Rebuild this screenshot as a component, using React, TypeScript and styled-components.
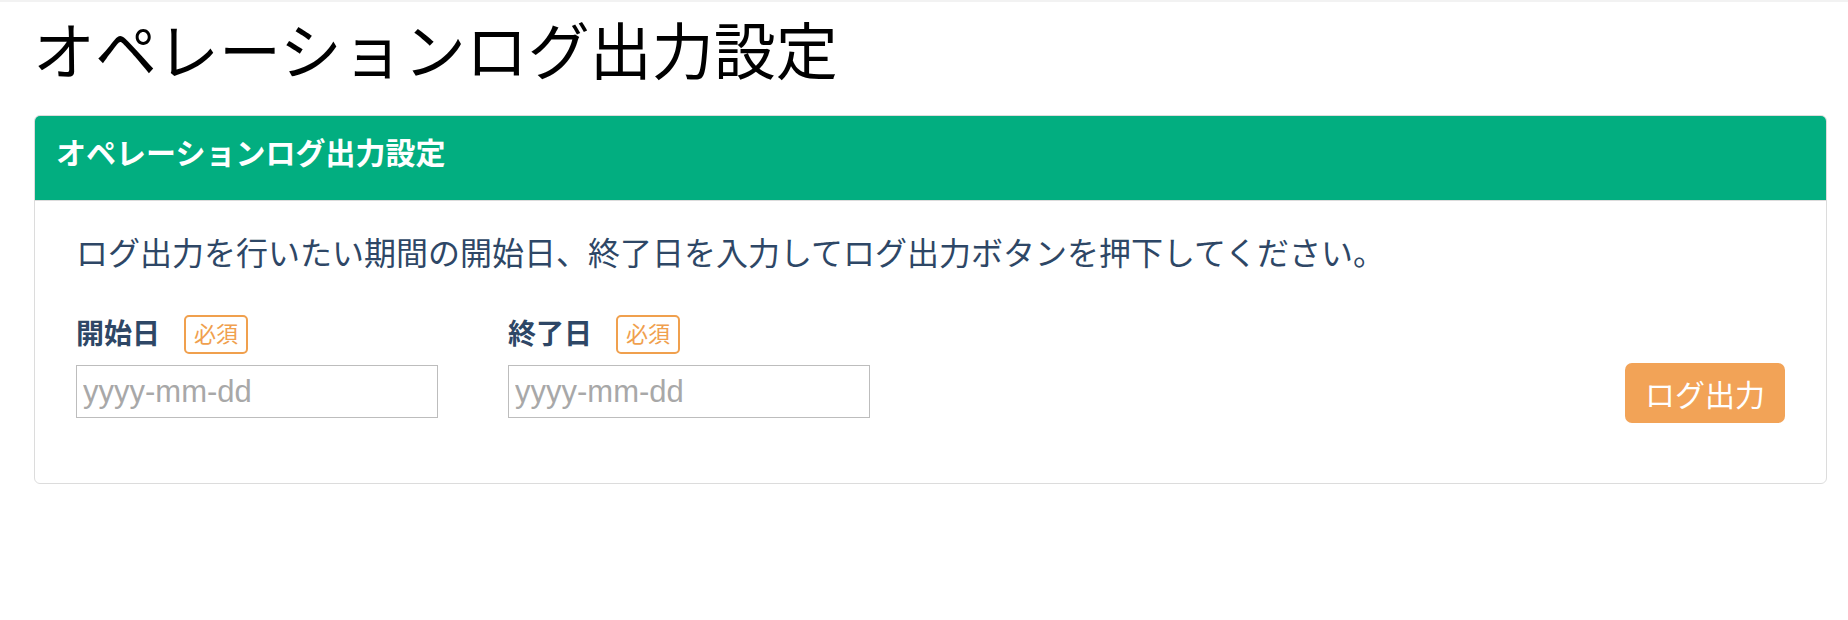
import * as React from 'react';
import styled, { createGlobalStyle } from 'styled-components';

const COLORS = {
  green: '#02ae80',
  navy: '#2e4766',
  orange: '#f2a357',
  badge: '#f0a04e',
  border: '#dcdcdc',
  inputBorder: '#bdbdbd',
  placeholder: '#a8a8a8',
};

const GlobalStyle = createGlobalStyle`
  html, body {
    margin: 0;
    padding: 0;
    background: #fff;
  }
  body {
    font-family: 'Liberation Sans', 'Noto Sans CJK JP', sans-serif;
    border-top: 2px solid #f2f2f2;
  }
`;

const Page = styled.div`
  padding: 0 21px 0 34px;
`;

const Title = styled.h1`
  margin: 15px 0 25px -1px;
  font-size: 62px;
  line-height: 73px;
  font-weight: 400;
  color: #000;
`;

const Card = styled.section`
  border: 1px solid ${COLORS.border};
  border-radius: 6px;
  overflow: hidden;
`;

const CardHeader = styled.div`
  background: ${COLORS.green};
  color: #fff;
  font-size: 30px;
  font-weight: 700;
  line-height: 42px;
  padding: 17px 21px 25px;
  border-bottom: 1px solid ${COLORS.border};
`;

const CardBody = styled.div`
  padding: 29px 41px 65px;
  color: ${COLORS.navy};
`;

const Lead = styled.p`
  margin: 0 0 37px;
  font-size: 32px;
  line-height: 48px;
`;

const FormRow = styled.div`
  display: flex;
  align-items: flex-end;
`;

const Field = styled.div`
  display: flex;
  flex-direction: column;
  gap: 11px;
  width: 362px;
  margin-right: 70px;
`;

const LabelLine = styled.div`
  display: flex;
  align-items: center;
  gap: 24px;
`;

const Label = styled.label`
  font-size: 28px;
  font-weight: 700;
  line-height: 39px;
`;

const Required = styled.span`
  box-sizing: border-box;
  height: 39px;
  padding: 0 8px;
  border: 2px solid ${COLORS.badge};
  border-radius: 5px;
  color: ${COLORS.badge};
  font-size: 22px;
  line-height: 35px;
`;

const DateInput = styled.input`
  box-sizing: border-box;
  width: 362px;
  height: 53px;
  margin: 0;
  padding: 0 6px;
  border: 1px solid ${COLORS.inputBorder};
  border-radius: 0;
  font-family: 'Liberation Sans', 'Noto Sans CJK JP', sans-serif;
  font-size: 31px;
  color: ${COLORS.navy};
  outline: none;

  &::placeholder {
    color: ${COLORS.placeholder};
  }
`;

const Spacer = styled.div`
  flex: 1;
`;

const OutputButton = styled.button`
  width: 160px;
  height: 60px;
  margin-bottom: -5px;
  border: none;
  border-radius: 7px;
  background: ${COLORS.orange};
  color: #fff;
  font-family: 'Liberation Sans', 'Noto Sans CJK JP', sans-serif;
  font-size: 30px;
  cursor: pointer;
`;

const fields = [
  { id: 'start', label: '開始日' },
  { id: 'end', label: '終了日' },
];

const App = () => {
  return (
    <Page>
      <GlobalStyle />
      <Title>オペレーションログ出力設定</Title>
      <Card>
        <CardHeader>オペレーションログ出力設定</CardHeader>
        <CardBody>
          <Lead>ログ出力を行いたい期間の開始日、終了日を入力してログ出力ボタンを押下してください。</Lead>
          <FormRow>
            {fields.map(({ id, label }) => (
              <Field key={id}>
                <LabelLine>
                  <Label htmlFor={id}>{label}</Label>
                  <Required>必須</Required>
                </LabelLine>
                <DateInput id={id} type="text" placeholder="yyyy-mm-dd" />
              </Field>
            ))}
            <Spacer />
            <OutputButton type="button">ログ出力</OutputButton>
          </FormRow>
        </CardBody>
      </Card>
    </Page>
  );
};

export default App;
